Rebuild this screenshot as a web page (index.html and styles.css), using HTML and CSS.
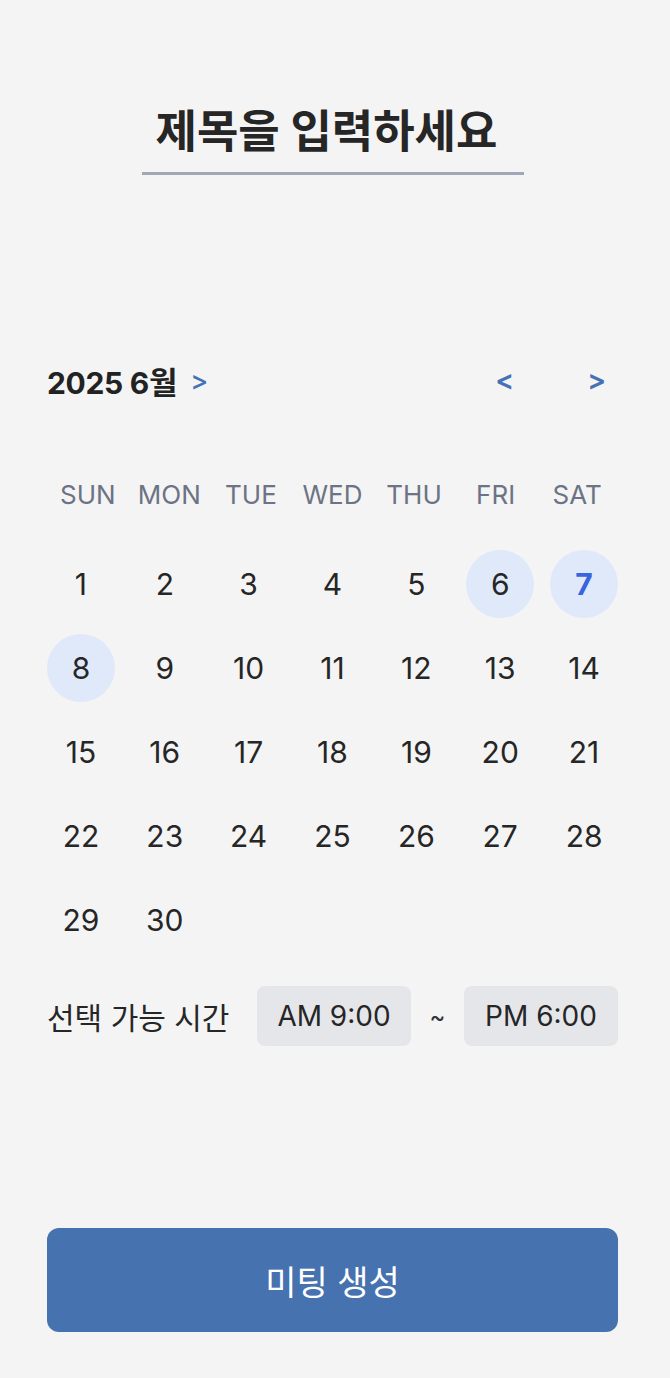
FILE: index.html
```html
<!DOCTYPE html>
<html lang="ko">
<head>
<meta charset="utf-8">
<title>미팅 생성</title>
<link rel="stylesheet" href="styles.css">
</head>
<body>
<main class="page">
  <div class="title-wrap">
    <div class="title">제목을 입력하세요</div>
  </div>

  <section class="calendar">
    <div class="cal-head">
      <div class="month"><span>2025 6<span class="ko">월</span></span><span class="month-arrow">&gt;</span></div>
      <div class="nav">
        <span class="nav-btn">&lt;</span>
        <span class="nav-btn">&gt;</span>
      </div>
    </div>

    <div class="weekdays">
      <span>SUN</span><span>MON</span><span>TUE</span><span>WED</span><span>THU</span><span>FRI</span><span>SAT</span>
    </div>

    <div class="days">
      <span class="day">1</span><span class="day">2</span><span class="day">3</span><span class="day">4</span><span class="day">5</span><span class="day sel">6</span><span class="day sel today">7</span>
      <span class="day sel">8</span><span class="day">9</span><span class="day">10</span><span class="day">11</span><span class="day">12</span><span class="day">13</span><span class="day">14</span>
      <span class="day">15</span><span class="day">16</span><span class="day">17</span><span class="day">18</span><span class="day">19</span><span class="day">20</span><span class="day">21</span>
      <span class="day">22</span><span class="day">23</span><span class="day">24</span><span class="day">25</span><span class="day">26</span><span class="day">27</span><span class="day">28</span>
      <span class="day">29</span><span class="day">30</span>
    </div>
  </section>

  <div class="time-row">
    <span class="time-label">선택 가능 시간</span>
    <span class="time-box">AM 9:00</span>
    <span class="tilde">~</span>
    <span class="time-box">PM 6:00</span>
  </div>

  <button class="create-btn">미팅 생성</button>
</main>
</body>
</html>
```

FILE: styles.css
```css
* { box-sizing: border-box; }

html, body {
  margin: 0;
  padding: 0;
  background: #f4f4f4;
}

body {
  font-family: Inter, "Noto Sans CJK KR", sans-serif;
  color: #222222;
}

.page {
  width: 670px;
  height: 1378px;
  padding: 0 52px 0 47px;
  display: flex;
  flex-direction: column;
}

.title-wrap {
  display: flex;
  justify-content: center;
  padding-top: 108px;
}

.title {
  width: 382px;
  text-align: center;
  font-size: 45px;
  line-height: 48px;
  font-weight: 700;
  color: #262626;
  padding: 0 12px 16px 0;
  border-bottom: 3px solid #a0a7b5;
}

.calendar {
  margin-top: 185px;
}

.cal-head {
  display: flex;
  justify-content: space-between;
  align-items: center;
  height: 40px;
}

.month {
  display: flex;
  align-items: center;
  gap: 13px;
  font-size: 30px;
  font-weight: 700;
  color: #222222;
  letter-spacing: -0.3px;
}

.month .ko {
  font-size: 31px;
}

.month-arrow {
  color: #4472b4;
  font-weight: 500;
  font-size: 27px;
  letter-spacing: 0;
}

.nav {
  display: flex;
  gap: 73px;
  padding-right: 12px;
}

.nav-btn {
  color: #4472b4;
  font-size: 28px;
  font-weight: 600;
}

.weekdays {
  margin-top: 74px;
  display: grid;
  grid-template-columns: repeat(7, 1fr);
  height: 40px;
  align-items: center;
  text-align: center;
  font-size: 26px;
  color: #6b7384;
}

.days {
  margin-top: 36px;
  display: grid;
  grid-template-columns: repeat(7, 1fr);
  grid-auto-rows: 68px;
  gap: 16px;
}

.day {
  display: flex;
  align-items: center;
  justify-content: center;
  font-size: 30px;
  color: #262626;
  border-radius: 50%;
}

.day.sel {
  background: #dfe9fa;
}

.day.today {
  color: #3a63e0;
  font-weight: 700;
}

.time-row {
  margin-top: 32px;
  display: flex;
  align-items: center;
  height: 60px;
}

.time-label {
  font-size: 30px;
  color: #262626;
  width: 210px;
}

.time-box {
  width: 154px;
  height: 60px;
  border-radius: 8px;
  background: #e5e6ea;
  display: flex;
  align-items: center;
  justify-content: center;
  font-size: 28px;
  color: #262626;
}

.tilde {
  width: 53px;
  text-align: center;
  font-size: 24px;
  color: #333333;
}

.create-btn {
  margin-top: 182px;
  width: 100%;
  height: 104px;
  border: none;
  border-radius: 12px;
  background: #4672af;
  color: #ffffff;
  font-family: Inter, "Noto Sans CJK KR", sans-serif;
  font-size: 34px;
  font-weight: 400;
}
```
